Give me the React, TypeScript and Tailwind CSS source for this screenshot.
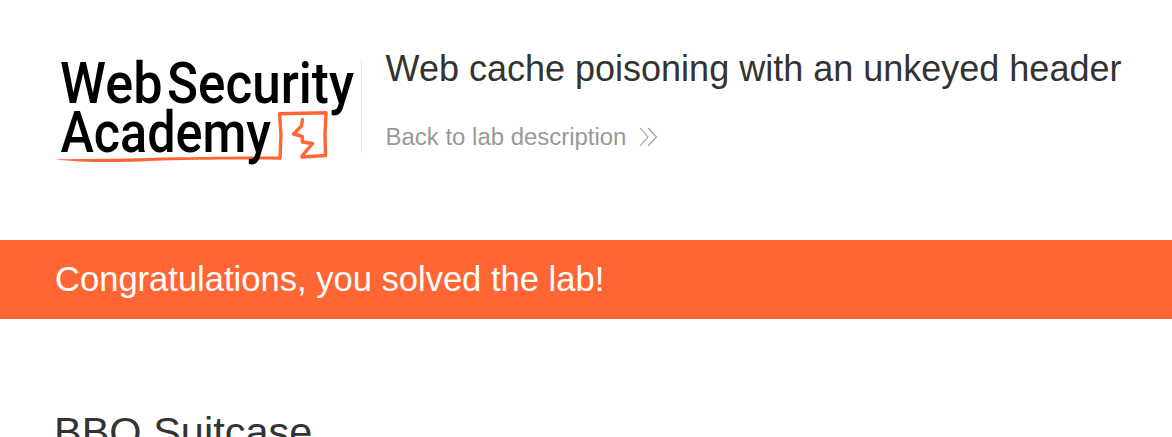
function Logo() {
  return (
    <svg
      width="308"
      height="110"
      viewBox="54 55 308 110"
      className="block shrink-0 overflow-visible"
      role="img"
      aria-label="Web Security Academy"
    >
      <path d="M55 159.300 C85 159 120 158.700 150 158 C190 157 240 156.600 281 156.500 L281 159.700 C240 159.500 190 159.500 150 161 C120 162.700 80 162.700 55 159.300Z" fill="#ff6633" />
      <g fill="none" stroke="#ff6633" strokeLinejoin="round" strokeLinecap="round" strokeWidth="3.400">
        <path d="M280 158 L281 135 L279.500 113.700 L326 112.800 L325 134 L325.500 155.500 L302 157" />
        <path d="M302.500 119.500 L301.500 126 L293.500 134 L302.300 136.500 L302.300 142 L312.500 143.500 L302 156" />
      </g>
      <g
        fill="#000"
        fontFamily="Roboto, 'Liberation Sans', sans-serif"
        fontWeight="500"
        fontSize="56.5"
      >
        <text x="60" y="103" textLength="102.500" lengthAdjust="spacingAndGlyphs">Web</text>
        <text x="167" y="103" textLength="187" lengthAdjust="spacingAndGlyphs">Security</text>
        <text x="60.500" y="151.500" textLength="210.500" lengthAdjust="spacingAndGlyphs">Academy</text>
      </g>
    </svg>
  );
}

export default function App() {
  return (
    <div className="h-[437px] overflow-hidden bg-white font-['Liberation_Sans',Arial,sans-serif] text-[#333332]">
      <header className="flex h-60 pl-[54px] pt-[55px]">
        <Logo />
        <div className="mt-[5px] h-[93px] w-px -ml-px shrink-0 bg-[#e2e2e2]" />
        <div className="ml-[23.6px] flex flex-col items-start whitespace-nowrap">
          <h1 className="-mt-[7px] text-[36px] leading-[42px]">Web cache poisoning with an unkeyed header</h1>
          <a href="#" className="mt-[33px] flex items-center text-[23.95px] leading-[28px] text-[#999999]">
            Back to lab description
            <svg width="20" height="20" viewBox="0 0 20 20" className="-mt-px ml-[12.5px]" fill="none" stroke="#999" strokeWidth="1.100">
              <path d="M1 1 L9 10 L1 19 M9 1 L17.500 10 L9 19" />
            </svg>
          </a>
        </div>
      </header>
      <section className="flex h-[79px] items-center bg-[#ff6633] pl-[55px] text-white">
        <p className="-mt-[2px] text-[34.55px] leading-[40px]">Congratulations, you solved the lab!</p>
      </section>
      <main className="pl-[54px] pt-[89px]">
        <h2 className="whitespace-nowrap text-[41.5px] leading-[48px]">BBQ Suitcase</h2>
      </main>
    </div>
  );
}
